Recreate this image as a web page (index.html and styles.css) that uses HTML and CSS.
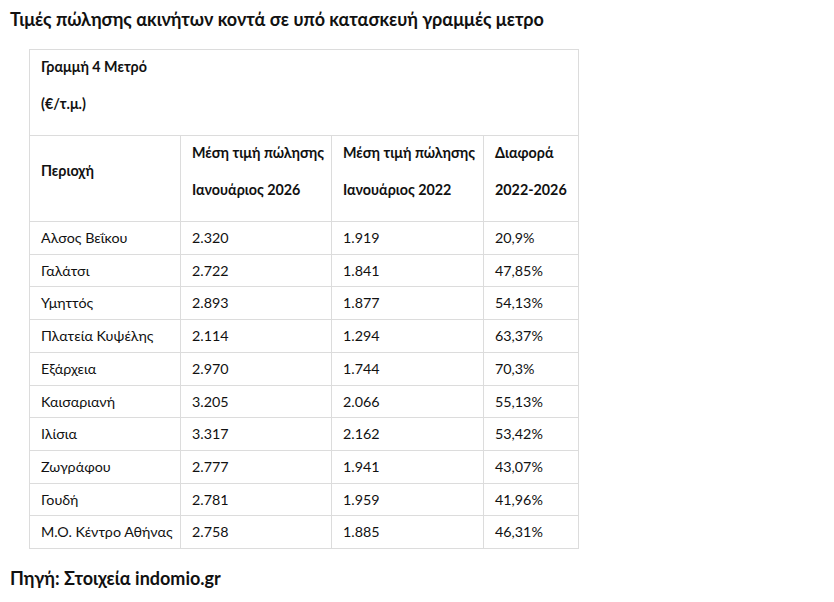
FILE: index.html
```html
<!DOCTYPE html>
<html lang="el">
<head>
<meta charset="utf-8">
<title>Τιμές πώλησης</title>
<link rel="stylesheet" href="styles.css">
</head>
<body>
<h2 class="title">Τιμές πώλησης ακινήτων κοντά σε υπό κατασκευή γραμμές μετρο</h2>
<table class="prices">
  <colgroup>
    <col class="c1"><col class="c2"><col class="c3"><col class="c4">
  </colgroup>
  <thead>
    <tr>
      <th colspan="4" class="head"><p>Γραμμή 4 Μετρό</p><p>(€/τ.μ.)</p></th>
    </tr>
    <tr>
      <th class="head"><p>Περιοχή</p></th>
      <th class="head"><p>Μέση τιμή πώλησης</p><p>Ιανουάριος 2026</p></th>
      <th class="head"><p>Μέση τιμή πώλησης</p><p>Ιανουάριος 2022</p></th>
      <th class="head"><p>Διαφορά</p><p>2022-2026</p></th>
    </tr>
  </thead>
  <tbody>
    <tr><td>Αλσος Βεΐκου</td><td>2.320</td><td>1.919</td><td>20,9%</td></tr>
    <tr><td>Γαλάτσι</td><td>2.722</td><td>1.841</td><td>47,85%</td></tr>
    <tr><td>Υμηττός</td><td>2.893</td><td>1.877</td><td>54,13%</td></tr>
    <tr><td>Πλατεία Κυψέλης</td><td>2.114</td><td>1.294</td><td>63,37%</td></tr>
    <tr><td>Εξάρχεια</td><td>2.970</td><td>1.744</td><td>70,3%</td></tr>
    <tr><td>Καισαριανή</td><td>3.205</td><td>2.066</td><td>55,13%</td></tr>
    <tr><td>Ιλίσια</td><td>3.317</td><td>2.162</td><td>53,42%</td></tr>
    <tr><td>Ζωγράφου</td><td>2.777</td><td>1.941</td><td>43,07%</td></tr>
    <tr><td>Γουδή</td><td>2.781</td><td>1.959</td><td>41,96%</td></tr>
    <tr><td>Μ.Ο. Κέντρο Αθήνας</td><td>2.758</td><td>1.885</td><td>46,31%</td></tr>
  </tbody>
</table>
<p class="source">Πηγή: Στοιχεία indomio.gr</p>
</body>
</html>
```
FILE: styles.css
```css
html, body {
  margin: 0;
  background: #fff;
}
body {
  padding: 0 10px;
  font-family: Lato, "Noto Sans", sans-serif;
  color: #111;
}
.title {
  margin: 0;
  padding-top: 7px;
  font-size: 18px;
  line-height: 24px;
  font-weight: 700;
}
.prices {
  margin: 18px 0 0 19px;
  border-collapse: collapse;
  width: 549px;
  table-layout: fixed;
  font-size: 14.3px;
}
.c1, .c2 { width: 151px; }
.c3 { width: 152px; }
.c4 { width: 95px; }
.prices th, .prices td {
  border: 1px solid #dcdcdc;
  text-align: left;
  vertical-align: middle;
  white-space: nowrap;
}
.prices th {
  padding: 5.5px 4px 5.5px 11px;
  font-weight: 700;
}
.prices th p {
  margin: 0 0 16px;
  line-height: 21px;
}
.prices td {
  padding: 6px 4px 6px 11px;
  line-height: 19.7px;
  font-weight: 400;
}
.source {
  margin: 17px 0 0;
  font-size: 18px;
  line-height: 24px;
  font-weight: 700;
}
```
